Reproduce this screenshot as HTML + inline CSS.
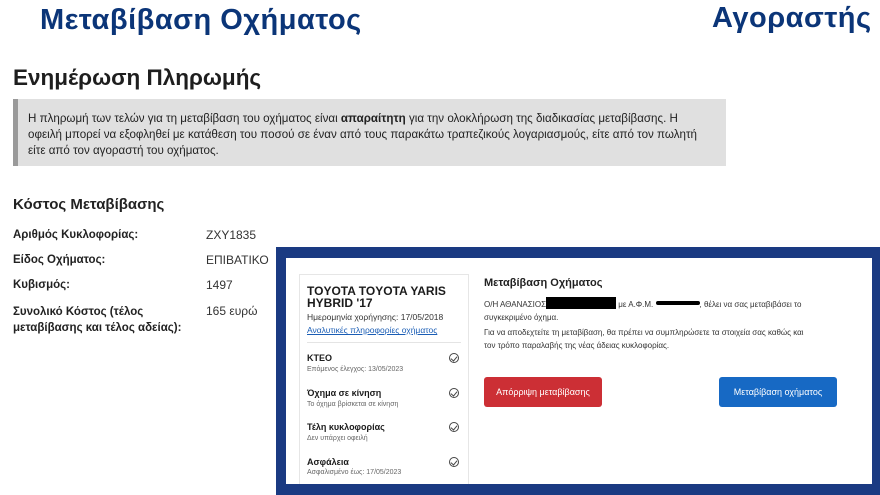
<!DOCTYPE html>
<html><head><meta charset="utf-8"><style>
*{margin:0;padding:0;box-sizing:border-box}
body{width:880px;height:495px;background:#fff;position:relative;overflow:hidden;font-family:"Liberation Sans","DejaVu Sans",sans-serif;color:#1b1b1b}
.a{position:absolute;white-space:nowrap}
.t{color:#0b3578;font-size:29px;font-weight:bold;font-family:"Liberation Sans",sans-serif;letter-spacing:0.5px}
.s{font-size:11.6px;color:#222}
.lb{font-size:11.5px;font-weight:bold;color:#222}
.v{font-size:12px;color:#333}
.ic{position:absolute;left:150px;width:10px;height:10px;border:1.3px solid #444;border-radius:50%}
.ic:after{content:"";position:absolute;left:2px;top:1px;width:3px;height:5px;border-right:1.3px solid #444;border-bottom:1.3px solid #444;transform:rotate(40deg)}
</style></head><body>
<div class="a t" style="left:40px;top:4px">Μεταβίβαση Οχήματος</div>
<div class="a t" style="left:712px;top:2px">Αγοραστής</div>
<div class="a" style="left:13px;top:65px;font-size:22.5px;font-weight:bold;color:#1e1e1e">Ενημέρωση Πληρωμής</div>
<div class="a" style="left:13px;top:99px;width:713px;height:67px;background:#e0e0e0;border-left:5px solid #9a9a9a"></div>
<div class="a s" style="left:28px;top:111px;line-height:16px">Η πληρωμή των τελών για τη μεταβίβαση του οχήματος είναι <b>απαραίτητη</b> για την ολοκλήρωση της διαδικασίας μεταβίβασης. Η<br>οφειλή μπορεί να εξοφληθεί με κατάθεση του ποσού σε έναν από τους παρακάτω τραπεζικούς λογαριασμούς, είτε από τον πωλητή<br>είτε από τον αγοραστή του οχήματος.</div>
<div class="a" style="left:13px;top:196px;font-size:15px;font-weight:bold;color:#222">Κόστος Μεταβίβασης</div>
<div class="a lb" style="left:13px;top:229px">Αριθμός Κυκλοφορίας:</div><div class="a v" style="left:206px;top:228px">ZXY1835</div>
<div class="a lb" style="left:13px;top:254px">Είδος Οχήματος:</div><div class="a v" style="left:206px;top:253px">ΕΠΙΒΑΤΙΚΟ</div>
<div class="a lb" style="left:13px;top:279px">Κυβισμός:</div><div class="a v" style="left:206px;top:278px">1497</div>
<div class="a lb" style="left:13px;top:304px;line-height:16px">Συνολικό Κόστος (τέλος<br>μεταβίβασης και τέλος αδείας):</div><div class="a v" style="left:206px;top:304px">165 ευρώ</div>

<div class="a" style="left:276px;top:247px;width:604px;height:248px;background:#1a3a82"></div>
<div class="a" style="left:286px;top:258px;width:586px;height:226px;background:#fff"></div>
<div class="a" style="left:299px;top:274px;width:170px;height:210px;border:1px solid #e6e6e6;border-bottom:none;background:#fff"></div>
<div style="position:absolute;left:299px;top:274px;width:170px;height:210px">
<div class="a" style="left:8px;top:11px;font-size:12px;font-weight:bold;line-height:12px">TOYOTA TOYOTA YARIS<br>HYBRID '17</div>
<div class="a" style="left:8px;top:38px;font-size:8.5px;color:#333">Ημερομηνία χορήγησης: 17/05/2018</div>
<div class="a" style="left:8px;top:51px;font-size:8.5px;color:#1a5db5;text-decoration:underline">Αναλυτικές πληροφορίες οχήματος</div>
<div class="a" style="left:8px;top:68px;width:154px;height:1px;background:#e4e4e4"></div>
<div class="a" style="left:8px;top:79px;font-size:9px;font-weight:bold">ΚΤΕΟ</div>
<div class="a" style="left:8px;top:92px;font-size:7px;color:#666">Επόμενος έλεγχος: 13/05/2023</div><div class="ic" style="top:79px"></div>
<div class="a" style="left:8px;top:114px;font-size:9px;font-weight:bold">Όχημα σε κίνηση</div>
<div class="a" style="left:8px;top:127px;font-size:7px;color:#666">Το όχημα βρίσκεται σε κίνηση</div><div class="ic" style="top:114px"></div>
<div class="a" style="left:8px;top:148px;font-size:9px;font-weight:bold">Τέλη κυκλοφορίας</div>
<div class="a" style="left:8px;top:161px;font-size:7px;color:#666">Δεν υπάρχει οφειλή</div><div class="ic" style="top:148px"></div>
<div class="a" style="left:8px;top:183px;font-size:9px;font-weight:bold">Ασφάλεια</div>
<div class="a" style="left:8px;top:195px;font-size:7px;color:#666">Ασφαλισμένο έως: 17/05/2023</div><div class="ic" style="top:183px"></div>
</div>
<div class="a" style="left:484px;top:277px;font-size:11px;font-weight:bold;color:#222">Μεταβίβαση Οχήματος</div>
<div class="a" style="left:484px;top:297px;font-size:8px;line-height:13px;color:#333">Ο/Η ΑΘΑΝΑΣΙΟΣ<span style="display:inline-block;width:70px;height:12px;background:#000;vertical-align:-2px"></span> με Α.Φ.Μ. <span style="display:inline-block;width:44px;height:4px;background:#000;vertical-align:2px;border-radius:2px"></span>, θέλει να σας μεταβιβάσει το<br>συγκεκριμένο όχημα.</div>
<div class="a" style="left:484px;top:326px;font-size:8px;line-height:13px;color:#333">Για να αποδεχτείτε τη μεταβίβαση, θα πρέπει να συμπληρώσετε τα στοιχεία σας καθώς και<br>τον τρόπο παραλαβής της νέας άδειας κυκλοφορίας.</div>
<div class="a" style="left:484px;top:377px;width:118px;height:30px;background:#cc2f35;border-radius:3px;color:#fff;font-size:9px;text-align:center;line-height:30px">Απόρριψη μεταβίβασης</div>
<div class="a" style="left:719px;top:377px;width:118px;height:30px;background:#1769c4;border-radius:3px;color:#fff;font-size:9px;text-align:center;line-height:30px">Μεταβίβαση οχήματος</div>
</body></html>
